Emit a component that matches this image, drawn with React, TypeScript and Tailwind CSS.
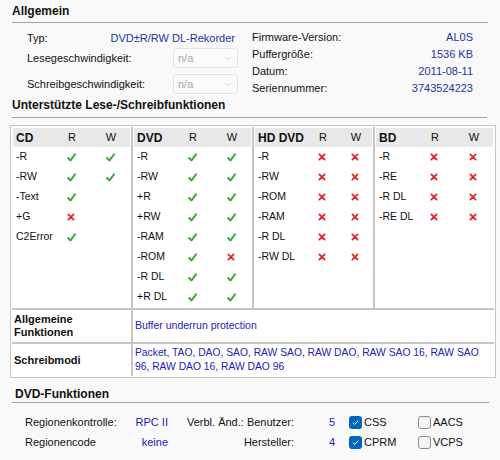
import { ChevronDown } from "lucide-react";

type Flag = 1 | 0 | null;
type Row = [string, Flag, Flag];

interface Group {
  name: string;
  wide?: boolean;
  rows: Row[];
}

const groups: Group[] = [
  {
    name: "CD",
    rows: [
      ["-R", 1, 1],
      ["-RW", 1, 1],
      ["-Text", 1, null],
      ["+G", 0, null],
      ["C2Error", 1, null],
    ],
  },
  {
    name: "DVD",
    rows: [
      ["-R", 1, 1],
      ["-RW", 1, 1],
      ["+R", 1, 1],
      ["+RW", 1, 1],
      ["-RAM", 1, 1],
      ["-ROM", 1, 0],
      ["-R DL", 1, 1],
      ["+R DL", 1, 1],
    ],
  },
  {
    name: "HD DVD",
    wide: true,
    rows: [
      ["-R", 0, 0],
      ["-RW", 0, 0],
      ["-ROM", 0, 0],
      ["-RAM", 0, 0],
      ["-R DL", 0, 0],
      ["-RW DL", 0, 0],
    ],
  },
  {
    name: "BD",
    rows: [
      ["-R", 0, 0],
      ["-RE", 0, 0],
      ["-R DL", 0, 0],
      ["-RE DL", 0, 0],
    ],
  },
];

function Check() {
  return (
    <svg width="9" height="9" viewBox="0 0 10 10">
      <path d="M1.3 5.6 L3.8 8.2 L8.8 1.5" fill="none" stroke="#2f9a2f" strokeWidth="2.2" strokeLinecap="round" strokeLinejoin="round" />
      <path d="M1.7 5.3 L3.8 7.3 L8.4 1.6" fill="none" stroke="#72d45c" strokeWidth="0.8" strokeLinecap="round" strokeLinejoin="round" />
    </svg>
  );
}

function Cross() {
  return (
    <svg width="8" height="8" viewBox="0 0 9 9">
      <path d="M1.5 1.5 L7.5 7.5 M7.5 1.5 L1.5 7.5" stroke="#e42626" strokeWidth="2" strokeLinecap="round" />
    </svg>
  );
}

function Mark({ v }: { v: Flag }) {
  if (v === null) return null;
  return v ? <Check /> : <Cross />;
}

function Combo() {
  return (
    <div className="w-[65px] h-[20px] border border-[#e3e3e3] rounded-[3px] bg-[#fbfbfb] flex items-center justify-between pl-[4px] pr-[4px] text-[#a9a9a9]">
      <span>n/a</span>
      <ChevronDown className="w-[11px] h-[11px] text-[#c4c4c4]" strokeWidth={1.5} />
    </div>
  );
}

function Checkbox({ checked, label }: { checked: boolean; label: string }) {
  return (
    <div className="flex items-center gap-[2px]">
      {checked ? (
        <span className="w-[13px] h-[13px] rounded-[3px] bg-[#0067c0] flex items-center justify-center">
          <svg width="9" height="9" viewBox="0 0 9 9">
            <path d="M1.8 4.6 L3.7 6.4 L7.3 2.6" fill="none" stroke="#fff" strokeWidth="1" />
          </svg>
        </span>
      ) : (
        <span className="w-[13px] h-[13px] rounded-[3px] border border-[#8d8d8d] bg-[#f5f5f5]" />
      )}
      <span>{label}</span>
    </div>
  );
}

function GroupCell({ g }: { g: Group }) {
  const labelW = g.wide ? "w-[57px]" : "w-[48px]";
  const wGap = g.wide ? "ml-[19px]" : "ml-[25px]";
  return (
    <div className="bg-white p-px">
      <div className="h-[19px] bg-[#e8e8e8] flex items-center pl-[4px] text-[11px]">
        <span className={`${labelW} font-bold text-[12px] -ml-px`}>{g.name}</span>
        <span className="w-[14px] text-center ml-px">R</span>
        <span className={`w-[14px] text-center ${wGap}`}>W</span>
      </div>
      {g.rows.map(([label, r, w], i) => (
        <div key={i} className="h-[20px] flex items-center pl-[3px]">
          <span className={labelW}>{label}</span>
          <span className="w-[14px] flex justify-center">
            <Mark v={r} />
          </span>
          <span className={`w-[14px] flex justify-center ${wGap}`}>
            <Mark v={w} />
          </span>
        </div>
      ))}
    </div>
  );
}

export default function App() {
  return (
    <div className="w-[500px] h-[460px] overflow-hidden bg-[#f9f9f9] text-[#111] font-['Liberation_Sans',Arial,sans-serif] text-[11px]">
      {/* Allgemein */}
      <div className="px-3 pt-[3px]">
        <h2 className="font-bold text-[12px] leading-[17px] pb-[2px] border-b border-[#a3a3a3]">Allgemein</h2>
      </div>
      <div className="flex pt-[7px]">
        <div className="ml-[27px] w-[211px]">
          <div className="h-[16px] flex items-center justify-between pr-[3px]">
            <span>Typ:</span>
            <span className="text-[#2136a6]">DVD±R/RW DL-Rekorder</span>
          </div>
          <div className="mt-[2px] h-[20px] flex items-center justify-between">
            <span>Lesegeschwindigkeit:</span>
            <Combo />
          </div>
          <div className="mt-[6px] h-[20px] flex items-center justify-between">
            <span>Schreibgeschwindigkeit:</span>
            <Combo />
          </div>
        </div>
        <div className="ml-[14px] w-[221px] -mt-px">
          {[
            ["Firmware-Version:", "AL0S"],
            ["Puffergröße:", "1536 KB"],
            ["Datum:", "2011-08-11"],
            ["Seriennummer:", "3743524223"],
          ].map(([k, v]) => (
            <div key={k} className="h-[17px] flex items-center justify-between">
              <span>{k}</span>
              <span className="text-[#2136a6]">{v}</span>
            </div>
          ))}
        </div>
      </div>

      {/* Unterstützte Lese-/Schreibfunktionen */}
      <div className="px-3 mt-px">
        <h2 className="font-bold text-[12px] leading-[14px] pb-[5px] border-b border-[#a3a3a3] mr-px">
          Unterstützte Lese-/Schreibfunktionen
        </h2>
      </div>
      <div className="mt-[7px] ml-[10px] w-[486px] border border-[#c6c6c6] bg-white p-px text-[10.5px]">
        <div className="grid grid-cols-4 gap-[2px] bg-[#c6c6c6]">
          {groups.map((g) => (
            <GroupCell key={g.name} g={g} />
          ))}
          <div className="bg-white h-[32px] flex flex-col justify-center pl-[2px] font-bold text-[11px] leading-[13px]">
            <span>Allgemeine</span>
            <span>Funktionen</span>
          </div>
          <div className="col-span-3 bg-white h-[32px] flex items-center pl-[2px] text-[#2222b8]">
            Buffer underrun protection
          </div>
          <div className="bg-white h-[32px] flex items-center pl-[2px] font-bold text-[11px]">Schreibmodi</div>
          <div className="col-span-3 bg-white h-[32px] flex flex-col justify-center pl-[2px] text-[#2222b8] text-[10.3px] leading-[14px] whitespace-nowrap">
            <span>Packet, TAO, DAO, SAO, RAW SAO, RAW DAO, RAW SAO 16, RAW SAO</span>
            <span>96, RAW DAO 16, RAW DAO 96</span>
          </div>
        </div>
      </div>

      {/* DVD-Funktionen */}
      <div className="pl-3 pr-[11px] mt-[9px]">
        <h2 className="font-bold text-[12px] leading-[14px] pb-px pl-[3px] border-b border-[#a3a3a3]">DVD-Funktionen</h2>
      </div>
      <div className="mt-[9px] ml-[25px]">
        {[
          ["Regionenkontrolle:", "RPC II", "Verbl. Änd.: Benutzer:", "5", "CSS", true, "AACS", false],
          ["Regionencode", "keine", "Hersteller:", "4", "CPRM", true, "VCPS", false],
        ].map(([a, b, c, d, e, ec, f, fc]) => (
          <div key={a as string} className="h-[20px] flex items-center">
            <span className="w-[100px]">{a}</span>
            <span className="w-[43px] text-right text-[#2222b8]">{b}</span>
            <span className="w-[126px] text-right">{c}</span>
            <span className="w-[41px] text-right text-[#2222b8]">{d}</span>
            <span className="ml-[14px] w-[69px]">
              <Checkbox checked={ec as boolean} label={e as string} />
            </span>
            <Checkbox checked={fc as boolean} label={f as string} />
          </div>
        ))}
      </div>
    </div>
  );
}
